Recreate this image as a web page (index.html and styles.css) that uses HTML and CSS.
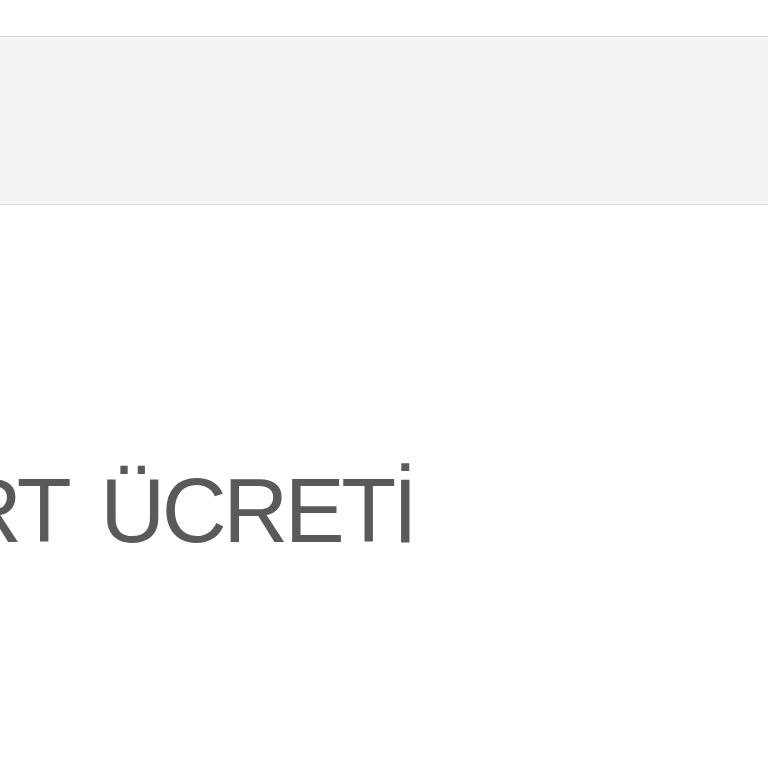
FILE: index.html
```html
<!DOCTYPE html>
<html lang="tr">
<head>
<meta charset="utf-8">
<link rel="stylesheet" href="styles.css">
</head>
<body>
<div class="page">
  <div class="band"></div>
  <div class="label-row"><span class="label">RT ÜCRETİ</span></div>
</div>
</body>
</html>
```
FILE: styles.css
```css
html, body {
  margin: 0;
  padding: 0;
  background: #ffffff;
}
.page {
  width: 768px;
  height: 768px;
  overflow: hidden;
  padding-top: 36px;
  box-sizing: border-box;
}
.band {
  height: 167px;
  background: #f3f3f3;
  border-top: 1px solid #d6d6d6;
  border-bottom: 1px solid #d6d6d6;
  box-shadow: inset 0 3px 0 #f6f6f6, inset 0 -3px 0 #f6f6f6;
}
.label-row {
  margin-top: 261px;
  white-space: nowrap;
}
.label {
  display: block;
  margin-left: -43px;
  font-family: "Liberation Sans", Arial, sans-serif;
  font-size: 90px;
  line-height: 90px;
  letter-spacing: -3.5px;
  word-spacing: 12px;
  color: #5a5a5a;
}
```
